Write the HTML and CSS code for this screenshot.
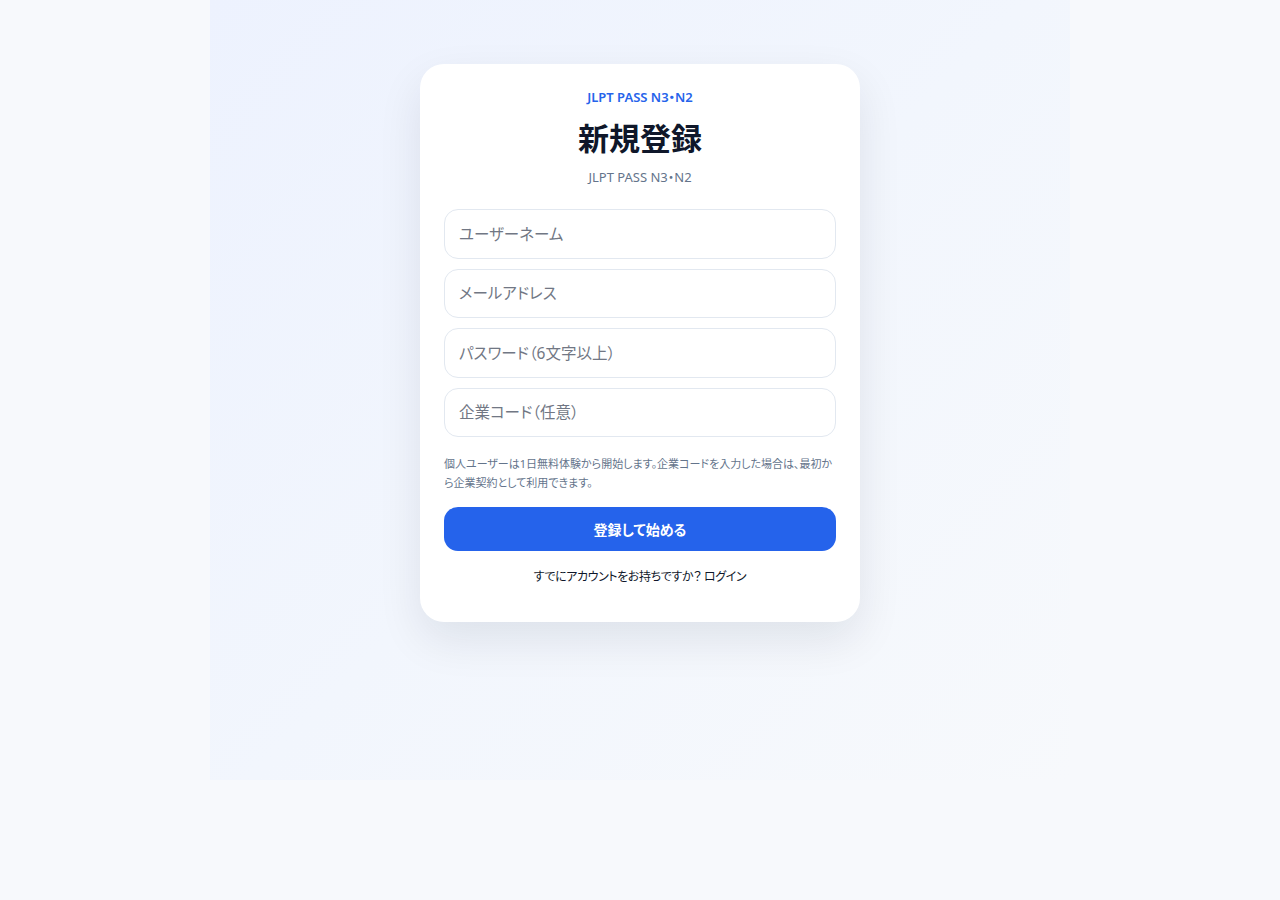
FILE: index.html
```html
<!DOCTYPE html>
<html lang="ja">
<head>
<meta charset="utf-8">
<title>新規登録 | JLPT PASS N3・N2</title>
<link rel="stylesheet" href="styles.css">
</head>
<body>
<main class="shell">
  <section class="card">
    <p class="eyebrow">JLPT PASS N3・N2</p>
    <h1 class="title">新規登録</h1>
    <p class="subtitle">JLPT PASS N3・N2</p>
    <form class="form">
      <input class="field" type="text" placeholder="ユーザーネーム">
      <input class="field" type="email" placeholder="メールアドレス">
      <input class="field" type="password" placeholder="パスワード（6文字以上）">
      <input class="field" type="text" placeholder="企業コード（任意）">
      <p class="note">個人ユーザーは1日無料体験から開始します。企業コードを入力した場合は、最初から企業契約として利用できます。</p>
      <button class="submit" type="button">登録して始める</button>
    </form>
    <p class="switch">すでにアカウントをお持ちですか？ <a class="switch-link" href="#">ログイン</a></p>
  </section>
</main>
</body>
</html>
```
FILE: styles.css
```css
* { box-sizing: border-box; }
html, body { margin: 0; padding: 0; }
body {
  background: #f7f9fc;
  font-family: "Noto Sans", "Noto Sans CJK JP", sans-serif;
  color: #0f172a;
  font-feature-settings: "palt" 1;
}
.shell {
  width: 860px;
  min-height: 780px;
  margin: 0 auto;
  padding-top: 64px;
  background: linear-gradient(135deg, #edf2fe 0%, #f2f6fd 50%, #f7f9fc 100%);
}
.card {
  width: 440px;
  margin: 0 auto;
  background: #ffffff;
  border-radius: 24px;
  padding: 24px 24px 35px;
  box-shadow: 0 18px 45px rgba(15, 23, 42, 0.09);
  text-align: center;
}
.eyebrow {
  margin: 0;
  font-size: 13px;
  line-height: 18px;
  font-weight: 600;
  color: #2563eb;
}
.title {
  margin: 14px 0 0;
  font-size: 31px;
  line-height: 36px;
  font-weight: 700;
  color: #0f172a;
}
.subtitle {
  margin: 12px 0 0;
  font-size: 13px;
  line-height: 18px;
  color: #64748b;
}
.form {
  margin-top: 23px;
  display: flex;
  flex-direction: column;
  gap: 10px;
}
.field {
  height: 49.5px;
  width: 100%;
  border: 1px solid #e2e8f0;
  border-radius: 14px;
  padding: 0 14px;
  font-family: inherit;
  font-feature-settings: "palt" 1;
  font-size: 15.5px;
  color: #0f172a;
  background: #ffffff;
  outline: none;
}
.field::placeholder { color: #717784; }
.note {
  margin: 7px 0 0;
  text-align: left;
  font-size: 11px;
  line-height: 19px;
  color: #64748b;
}
.submit {
  margin-top: 5px;
  height: 44px;
  border: 0;
  border-radius: 14px;
  background: #2563eb;
  color: #ffffff;
  font-family: inherit;
  font-feature-settings: "palt" 1;
  font-size: 14px;
  font-weight: 700;
}
.switch {
  margin: 16px 0 0;
  font-size: 12px;
  letter-spacing: -0.4px;
  line-height: 20px;
  color: #0f172a;
}
.switch-link {
  color: #0f172a;
  text-decoration: none;
}
```
